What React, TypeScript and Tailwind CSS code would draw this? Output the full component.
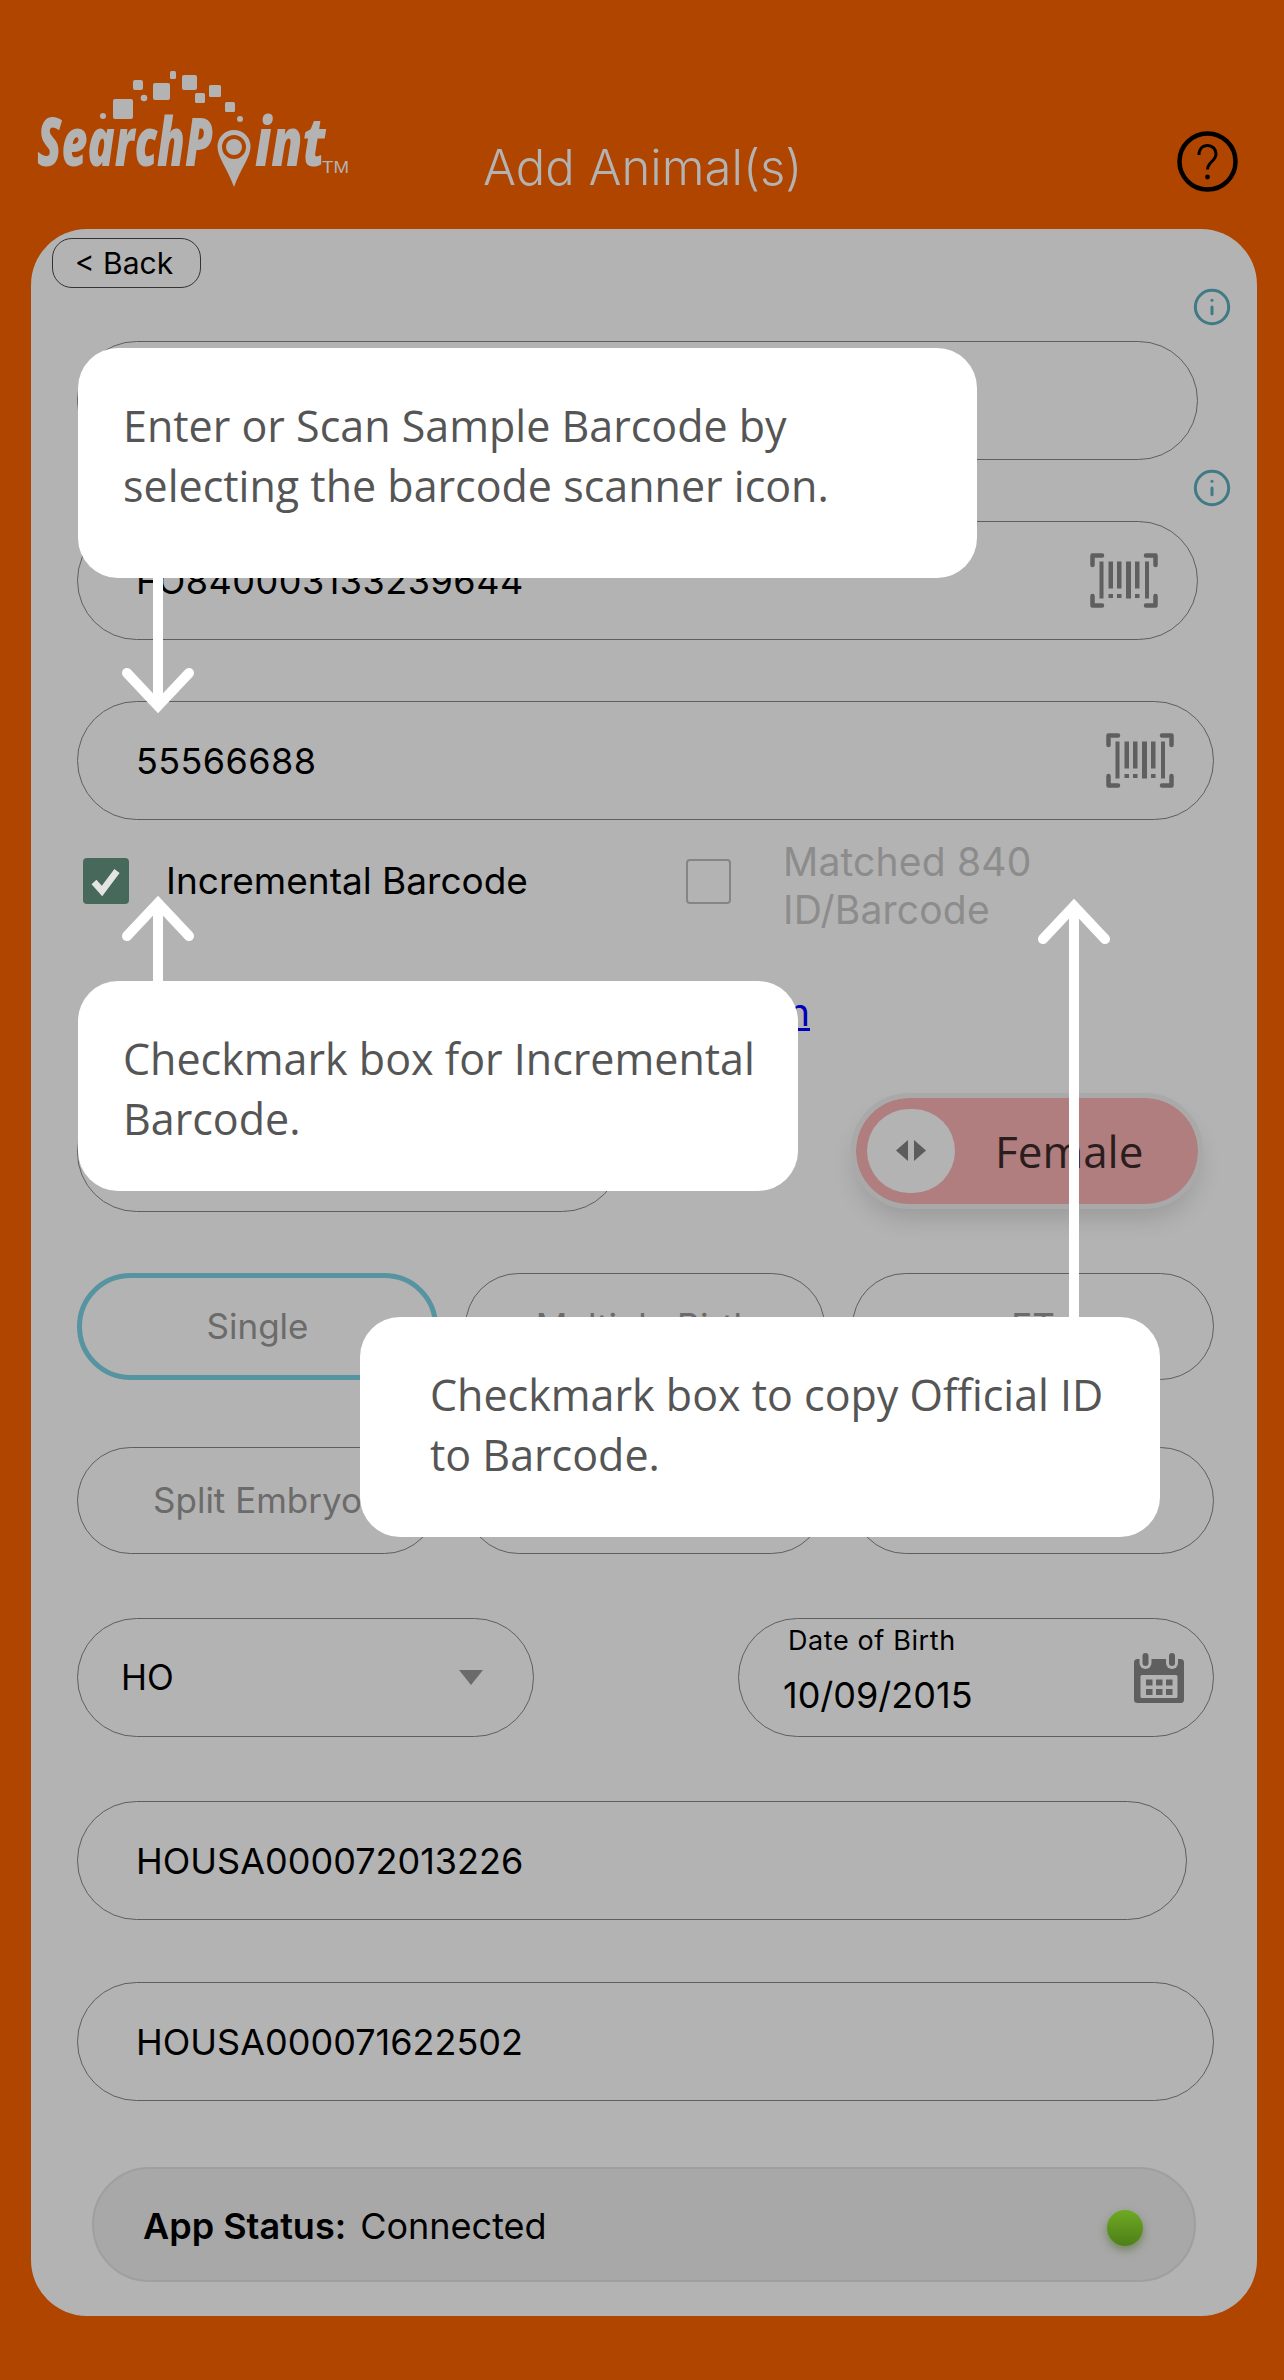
import React from "react";
import { Info } from "lucide-react";

const Barcode = ({ className }: { className: string }) => (
  <svg viewBox="0 0 68 55" className={className} fill="#5f5f5f">
    <g fill="none" stroke="#5f5f5f" strokeWidth="4.5" strokeLinejoin="round" strokeLinecap="round">
      <path d="M2.5 12V2.5H12" />
      <path d="M56 2.5H65.5V12" />
      <path d="M2.5 43V52.5H12" />
      <path d="M56 52.5H65.5V43" />
    </g>
    <rect x="9.5" y="8.5" width="4" height="37" />
    <rect x="18.5" y="8.5" width="4.5" height="27" />
    <rect x="18.5" y="41" width="4.5" height="4" />
    <rect x="27" y="8.5" width="4.5" height="27" />
    <rect x="27" y="41" width="4.5" height="4" />
    <rect x="36" y="8.5" width="5" height="37" />
    <rect x="45" y="8.5" width="4.5" height="27" />
    <rect x="45" y="41" width="4.5" height="4" />
    <rect x="55" y="8.5" width="4" height="37" />
  </svg>
);

const Calendar = () => (
  <svg viewBox="0 0 50 50" className="w-[50px] h-[50px] shrink-0">
    <rect x="0" y="6" width="50" height="44" rx="3.5" fill="#5f5f5f" />
    <path d="M5.5 5V10a6 6 0 0 0 12 0V5" fill="#b3b3b3" />
    <path d="M32 5V10a6 6 0 0 0 12 0V5" fill="#b3b3b3" />
    <rect x="8.5" y="0" width="6" height="13" rx="3" fill="#5f5f5f" />
    <rect x="35" y="0" width="6" height="13" rx="3" fill="#5f5f5f" />
    <rect x="6.5" y="22" width="37" height="23" rx="1.5" fill="#b3b3b3" />
    {[12, 22, 32].map((x) =>
      [26.5, 36].map((y) => <rect key={`${x}-${y}`} x={x} y={y} width="6.5" height="6" fill="#5f5f5f" />)
    )}
  </svg>
);

const Logo = () => (
  <svg viewBox="0 0 330 130" className="ml-[30px] mt-[60px] w-[330px] h-[130px] shrink-0" fill="#b3b3b3">
    <rect x="83" y="39" width="20" height="20" rx="2" />
    <rect x="123" y="23" width="17" height="17" rx="2" />
    <rect x="103" y="20" width="10" height="10" rx="2" />
    <rect x="152" y="15" width="15" height="15" rx="2" />
    <rect x="140" y="11" width="6" height="8" rx="1.5" />
    <rect x="179" y="25" width="12" height="12" rx="1.5" />
    <rect x="165" y="33" width="10" height="10" rx="1.5" />
    <rect x="195" y="42" width="10" height="10" rx="1.5" />
    <circle cx="114" cy="38" r="3.3" />
    <circle cx="73" cy="56" r="3" />
    <circle cx="210" cy="59" r="3" />
    <g fontFamily="'Open Sans', sans-serif" fontWeight="800" fontStyle="italic" fontSize="68">
      <text transform="translate(7 106) scale(0.66 1)">SearchP</text>
      <text transform="translate(225 106) scale(0.74 1)">int</text>
    </g>
    <path fillRule="evenodd" d="M204 70a16.5 16.5 0 0 1 16.5 17c0 10-10 22-16.5 40-6.500-18-16.500-30-16.500-40A16.500 16.500 0 0 1 204 70Zm0 5a12 12 0 1 0 0 24 12 12 0 0 0 0-24Z" />
    <circle cx="204" cy="87" r="8" />
    <text transform="translate(292 113) scale(1.1 1)" fontFamily="'Liberation Sans', sans-serif" fontSize="17">TM</text>
  </svg>
);

const Help = () => (
  <svg viewBox="0 0 61 61" className="absolute left-[1177px] top-[131px] w-[61px] h-[61px]" fill="none" stroke="#000000">
    <circle cx="30.5" cy="30.5" r="28" strokeWidth="4.5" />
    <path d="M22 24c0-6 3.500-9.500 8.500-9.500s8.500 3.500 8.500 8.500c0 7-8.500 8-8.500 15.500" strokeWidth="3" />
    <circle cx="30.500" cy="46" r="2.400" fill="#000000" stroke="none" />
  </svg>
);

const Field = ({ w, text, icon, mt, track = "" }: { w: string; text?: string; icon?: boolean; mt: string; track?: string }) => (
  <div className={`${w} ${mt} h-[119px] rounded-[60px] border-[1.5px] border-[#5f5f5f] flex items-center justify-between pl-[58px] pr-[39px] shrink-0`}>
    <span className={`text-[36px] text-black ${track}`}>{text}</span>
    {icon && <Barcode className="w-[68px] h-[55px] shrink-0" />}
  </div>
);

const Choice = ({ label, active }: { label?: string; active?: boolean }) => (
  <div className={`h-[107px] rounded-[54px] flex items-center justify-center text-[35px] text-[#6b6b6b] ${active ? "border-[5px] border-[#5594a0]" : "border-[1.5px] border-[#5f5f5f]"}`}>
    {label}
  </div>
);

const Tip = ({ className, lines }: { className: string; lines: string[] }) => (
  <div className={`absolute bg-white rounded-[40px] pt-[48px] text-[43px] leading-[60px] text-[#555555] font-['Open_Sans',sans-serif] ${className}`}>
    {lines.map((l) => (
      <div key={l} className="whitespace-nowrap">{l}</div>
    ))}
  </div>
);

const Arrow = ({ x, tip, end, up }: { x: number; tip: number; end: number; up?: boolean }) => {
  const d = up ? 33 : -33;
  return (
    <g fill="none" stroke="#ffffff" strokeWidth="10" strokeLinecap="round">
      <path d={`M${x} ${tip}V${end}`} strokeLinecap="butt" />
      <path d={`M${x - 31} ${tip + d}L${x} ${tip}L${x + 31} ${tip + d}`} strokeLinejoin="miter" />
    </g>
  );
};

export default function App() {
  return (
    <div className="relative w-[1284px] h-[2380px] overflow-hidden bg-[#b04500] font-['Inter',sans-serif]">
      <header className="h-[229px] relative flex items-start">
        <Logo />
      </header>
      <div className="absolute left-[483px] top-[136px] text-[49px] leading-[64px] font-light text-[#b3b3b3] whitespace-nowrap">Add Animal(s)</div>
      <Help />

      <main className="relative ml-[31px] w-[1226px] h-[2087px] rounded-[56px] bg-[#b3b3b3] flex flex-col pl-[46px]">
        <div className="-ml-[25px] mt-[9px] w-[149px] h-[50px] rounded-[20px] border border-[#333333] flex items-center justify-center pr-[5px] text-[30px] text-black shrink-0">
          &lt; Back
        </div>
        <Info className="self-end mr-[25px] -mt-[1px] w-[40px] h-[40px] text-[#3f7a85] shrink-0" strokeWidth={1.8} />
        <Field w="w-[1121px]" mt="mt-[14px]" />
        <Info className="self-end mr-[25px] mt-[8px] w-[40px] h-[40px] text-[#3f7a85] shrink-0" strokeWidth={1.8} />
        <Field w="w-[1121px]" mt="mt-[13px]" text="FO840003133239644" icon track="tracking-[0.5px]" />
        <Field w="w-[1137px]" mt="mt-[61px]" text="55566688" icon track="tracking-[0.4px]" />

        <div className="mt-[19px] h-[96px] flex items-center shrink-0">
          <div className="mb-[12px] ml-[6px] w-[46px] h-[46px] rounded-[4px] bg-[#47695c] flex items-center justify-center shrink-0">
            <svg viewBox="0 0 46 46" className="w-[46px] h-[46px]"><path d="M11 24L19 33L34 13" fill="none" stroke="#e4e4e4" strokeWidth="6.500" /></svg>
          </div>
          <span className="mb-[12px] ml-[37px] w-[520px] text-[37px] text-black whitespace-nowrap">Incremental Barcode</span>
          <div className="mb-[12px] w-[45px] h-[45px] rounded-[4px] border-2 border-[#858585] shrink-0" />
          <div className="mb-[3px] ml-[52px] text-[39px] leading-[48px] text-[#8c8c8c] tracking-[0.2px]">
            <div>Matched 840</div>
            <div>ID/Barcode</div>
          </div>
        </div>

        <div className="mt-[56px] h-[44px] w-[733px] flex justify-end shrink-0">
          <span className="text-[38px] leading-[42px] text-[#0000b8] underline">n</span>
        </div>

        <div className="mt-[58px] flex items-start w-[1137px] shrink-0">
          <div className="w-[545px] h-[119px] rounded-[60px] border-[1.5px] border-[#5f5f5f] shrink-0" />
          <div className="ml-[234px] mt-[5px] w-[342px] h-[106px] rounded-[53px] bg-[#b07e7e] outline-[5px] outline-[#a9a9a9] shadow-[0_14px_24px_rgba(0,0,0,0.14)] flex items-center pl-[11px] shrink-0">
            <div className="w-[88px] h-[84px] rounded-full bg-[#b3b3b3] flex items-center justify-center shrink-0">
              <svg viewBox="0 0 30 22" className="w-[30px] h-[22px]" fill="#5c5c5c"><path d="M12 0V21L0 10.500Z" /><path d="M18 0V21L30 10.500Z" /></svg>
            </div>
            <span className="ml-[40px] text-[44px] text-[#2b1d1d] font-['Open_Sans',sans-serif] whitespace-nowrap">Female</span>
          </div>
        </div>

        <div className="mt-[61px] grid grid-cols-[361px_360px_362px] gap-x-[27px] w-[1137px] shrink-0">
          <Choice label="Single" active />
          <Choice label="Multiple Birth" />
          <Choice label="ET" />
        </div>
        <div className="mt-[67px] grid grid-cols-[361px_360px_362px] gap-x-[27px] w-[1137px] shrink-0">
          <Choice label="Split Embryo" />
          <Choice />
          <Choice />
        </div>

        <div className="mt-[64px] flex justify-between w-[1137px] shrink-0">
          <div className="w-[457px] h-[119px] rounded-[60px] border-[1.5px] border-[#5f5f5f] flex items-center justify-between pl-[43px] pr-[50px]">
            <span className="text-[35px] text-black">HO</span>
            <svg viewBox="0 0 24 15" className="w-[24px] h-[15px]"><path d="M0 0H24L12 15Z" fill="#6b6b6b" /></svg>
          </div>
          <div className="w-[476px] h-[119px] rounded-[60px] border-[1.5px] border-[#5f5f5f] flex items-center justify-between pl-[44px] pr-[29px]">
            <div className="flex flex-col mb-[12px]">
              <span className="ml-[5px] text-[27px] leading-[30px] text-black tracking-[0.6px]">Date of Birth</span>
              <span className="mt-[17px] text-[36px] leading-[44px] text-black">10/09/2015</span>
            </div>
            <Calendar />
          </div>
        </div>

        <Field w="w-[1110px]" mt="mt-[64px]" text="HOUSA000072013226" />
        <Field w="w-[1137px]" mt="mt-[62px]" text="HOUSA000071622502" />

        <div className="ml-[15px] mt-[66px] w-[1104px] h-[115px] rounded-[58px] bg-[#a8a8a8] border-2 border-[#9f9f9f] flex items-center justify-between pl-[49px] pr-[51px] shrink-0">
          <span className="pt-[3px] text-[36px] text-black whitespace-nowrap">
            <span className="font-semibold">App Status:</span>
            <span className="ml-[14px]">Connected</span>
          </span>
          <div className="w-[36px] h-[36px] rounded-full bg-gradient-to-b from-[#6fa923] to-[#4e7f18] shadow-[0_4px_8px_rgba(60,100,20,0.5)] translate-y-[3px]" />
        </div>
      </main>

      <svg className="absolute inset-0 w-[1284px] h-[2380px] pointer-events-none" viewBox="0 0 1284 2380">
        <Arrow x={158} tip={706} end={578} />
        <Arrow x={158} tip={903} end={985} up />
        <Arrow x={1074} tip={906} end={1320} up />
      </svg>
      <Tip className="left-[78px] top-[348px] w-[899px] h-[230px] pl-[45px]" lines={["Enter or Scan Sample Barcode by", "selecting the barcode scanner icon."]} />
      <Tip className="left-[78px] top-[981px] w-[720px] h-[210px] pl-[45px]" lines={["Checkmark box for Incremental", "Barcode."]} />
      <Tip className="left-[360px] top-[1317px] w-[800px] h-[220px] pl-[70px]" lines={["Checkmark box to copy Official ID", "to Barcode."]} />
    </div>
  );
}
